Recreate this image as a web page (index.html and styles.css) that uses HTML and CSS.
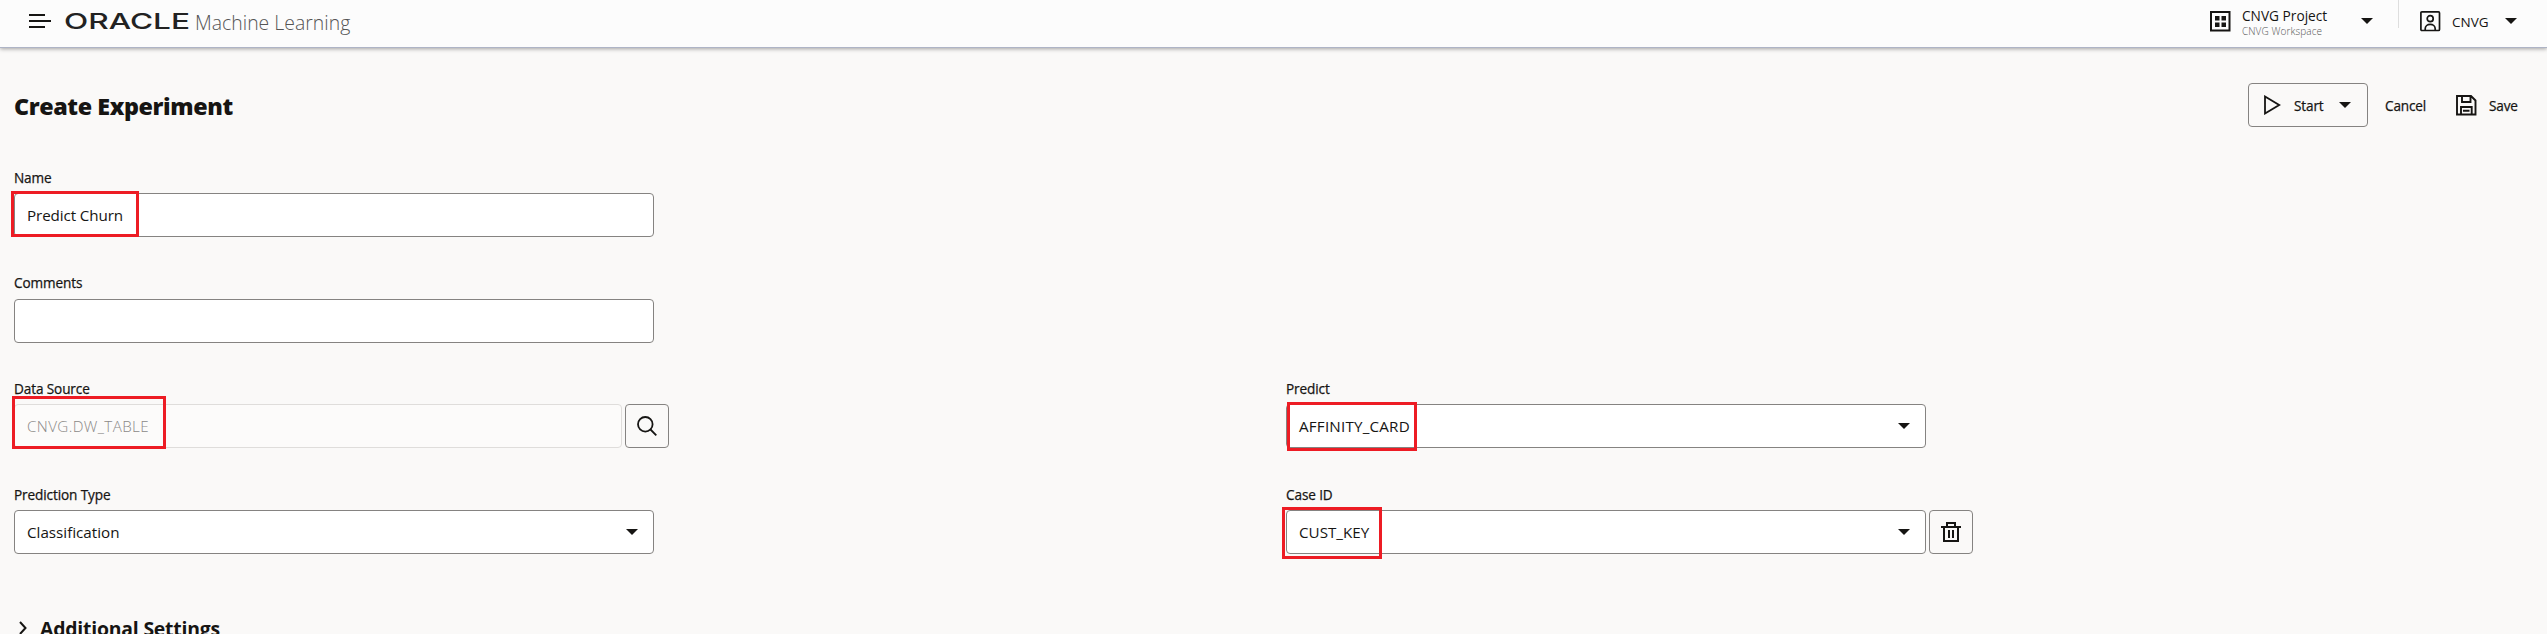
FILE: index.html
```html
<!DOCTYPE html>
<html lang="en">
<head>
<meta charset="utf-8">
<title>Create Experiment</title>
<link rel="stylesheet" href="styles.css">
</head>
<body>
<header class="topbar">
  <svg class="menu-icon" width="22" height="14" viewBox="0 0 22 14"><path d="M0 1h16M0 7h22M0 13h16" stroke="#161513" stroke-width="2"/></svg>
  <svg class="brand" width="125" height="32" viewBox="0 0 125 32"><text class="brand-text" x="-1" y="24" textLength="126" lengthAdjust="spacingAndGlyphs">ORACLE</text></svg>
  <span class="product">Machine Learning</span>
  <div class="top-right">
    <svg class="project-icon" width="21" height="21" viewBox="0 0 21 21"><path d="M1 1h18.500v18.500H1z" fill="none" stroke="#161513" stroke-width="2"/><path d="M5 5h4.500v4.500H5zM11.500 5H16v4.500h-4.500zM5 11.500h4.500V16H5zM11.500 11.500H16V16h-4.500z" fill="#161513"/></svg>
    <div class="project"><span class="project-name">CNVG Project</span><span class="workspace">CNVG Workspace</span></div>
    <svg class="caret project-caret" width="12" height="6" viewBox="0 0 12 6"><path d="M0 0h12L6 6z"/></svg>
    <div class="divider"></div>
    <svg class="user-icon" width="21" height="21" viewBox="0 0 21 21" fill="none" stroke="#161513" stroke-width="1.700"><rect x=".9" y=".9" width="18.600" height="18.600" rx="1"/><circle cx="10.200" cy="7.700" r="3"/><path d="M5.200 19v-1.300a5 4.300 0 0 1 10 0V19"/></svg>
    <span class="user">CNVG</span>
    <svg class="caret user-caret" width="12" height="6" viewBox="0 0 12 6"><path d="M0 0h12L6 6z"/></svg>
  </div>
</header>
<main class="page">
  <div class="title-row">
    <h1 class="title">Create Experiment</h1>
    <div class="actions">
      <button class="start">
        <svg class="play" width="17" height="20" viewBox="0 0 17 20"><path d="M1 1.500v17L15.200 10z" fill="none" stroke="#161513" stroke-width="1.800"/></svg>
        <span class="start-text">Start</span>
        <svg class="caret" width="12" height="6" viewBox="0 0 12 6"><path d="M0 0h12L6 6z"/></svg>
      </button>
      <span class="cancel">Cancel</span>
      <svg class="save-icon" width="21" height="21" viewBox="0 0 21 21" fill="none" stroke="#161513" stroke-width="1.900"><path d="M1 1h14l4.500 4.500v14H1zM6 1v6h8.500V1M5 19.500V12h10.700v7.500M7 15.800h6.500"/></svg>
      <span class="save">Save</span>
    </div>
  </div>
  <div class="form">
    <div class="field name-field"><label class="label">Name</label><div class="control"><div class="input"><span class="v-name">Predict Churn</span></div></div><i class="mark mark-name"></i></div>
    <div class="field comments-field"><label class="label">Comments</label><div class="control"><div class="input"></div></div></div>
    <div class="field source-field"><label class="label">Data Source</label><div class="control"><div class="input disabled"><span class="v-source">CNVG.DW_TABLE</span></div><button class="icon-button"><svg width="22" height="22" viewBox="0 0 22 22" fill="none" stroke="#161513" stroke-width="1.800"><circle cx="9.300" cy="9.300" r="7.300"/><path d="M14.500 14.500l5.800 5.800"/></svg></button></div><i class="mark mark-source"></i></div>
    <div class="field predict-field"><label class="label">Predict</label><div class="control"><div class="input"><span class="v-predict">AFFINITY_CARD</span><svg class="caret" width="12" height="6" viewBox="0 0 12 6"><path d="M0 0h12L6 6z"/></svg></div></div><i class="mark mark-predict"></i></div>
    <div class="field type-field"><label class="label">Prediction Type</label><div class="control"><div class="input"><span class="v-type">Classification</span><svg class="caret" width="12" height="6" viewBox="0 0 12 6"><path d="M0 0h12L6 6z"/></svg></div></div></div>
    <div class="field case-field"><label class="label">Case ID</label><div class="control"><div class="input"><span class="v-case">CUST_KEY</span><svg class="caret" width="12" height="6" viewBox="0 0 12 6"><path d="M0 0h12L6 6z"/></svg></div><button class="icon-button"><svg width="20" height="20" viewBox="0 0 20 20" fill="none" stroke="#161513" stroke-width="2"><path d="M0 5h20M3 5v14h14V5M6 5V1h8v4M8 8v8M12 8v8"/></svg></button></div><i class="mark mark-case"></i></div>
  </div>
  <div class="section">
    <svg class="chevron" width="8" height="14" viewBox="0 0 8 14"><path d="M1 1l5.500 6L1 13" fill="none" stroke="#161513" stroke-width="2"/></svg>
    <h2 class="section-title">Additional Settings</h2>
  </div>
</main>
</body>
</html>
```
FILE: styles.css
```css
* { box-sizing: border-box; }
body { margin: 0; width: 2547px; height: 634px; overflow: hidden; background: #faf9f8; color: #161513; font-family: "Open Sans", "Noto Sans", sans-serif; }
svg { display: block; flex: none; }
span, h1, h2, label { white-space: nowrap; }
button { font-family: inherit; background: transparent; border: 1px solid #858381; border-radius: 4px; padding: 0; color: inherit; }
.caret { fill: #161513; }
.topbar { height: 48px; display: flex; align-items: flex-start; background: #fcfcfc; border-bottom: 1px solid #aeb4c6; box-shadow: 0 1px 4px rgba(0, 0, 0, .35); padding-left: 29px; }
.menu-icon { margin-top: 14px; }
.brand { margin: 5px 0 0 14px; }
.brand-text { font: 500 22px Inter, sans-serif; fill: #222; }
.product { margin: 9px 0 0 5px; font-size: 19.400px; line-height: 28px; font-weight: 300; color: #555; letter-spacing: .02px; }
.top-right { margin-left: auto; width: 337px; display: flex; align-items: flex-start; }
.project-icon { margin-top: 11px; }
.project { width: 119px; margin: 7px 0 0 11px; display: flex; flex-direction: column; }
.project-name { font-size: 13.700px; line-height: 18px; }
.workspace { font-size: 10px; line-height: 12px; font-weight: 300; color: #555; letter-spacing: .1px; }
.project-caret { margin-top: 18px; }
.divider { width: 1px; height: 28px; margin-left: 25px; background: #dedede; }
.user-icon { margin: 11px 0 0 21px; }
.user { width: 53px; margin: 13px 0 0 11px; font-size: 13.500px; line-height: 18px; }
.user-caret { margin-top: 18px; }
.page { padding: 35px 30px 0 14px; }
.title-row { height: 44px; display: flex; align-items: center; justify-content: space-between; }
.title { margin: 0; padding-top: 2px; font-size: 23.300px; line-height: 32px; font-weight: 800; letter-spacing: -.4px; }
.actions { display: flex; align-items: center; font-size: 13.600px; }
.start { width: 120px; height: 44px; display: flex; align-items: center; padding-left: 15px; font-size: 13.600px; }
.start-text, .cancel, .save { padding-top: 1px; letter-spacing: -.15px; -webkit-text-stroke: .25px #161513; }
.start-text { width: 45px; margin-left: 13px; text-align: left; }
.cancel { width: 41px; margin-left: 17px; }
.save-icon { margin-left: 30px; }
.save { width: 28px; margin-left: 12px; }
.form { display: grid; grid-template-columns: 1272px 1fr; grid-template-rows: 106px 105px 106px 64px; padding-top: 40px; }
.field { position: relative; }
.name-field, .comments-field { grid-column: 1 / 3; }
.label { display: block; height: 26px; padding-top: 2px; font-size: 13.600px; line-height: 18px; letter-spacing: -.12px; -webkit-text-stroke: .25px #161513; }
.comments-field .label { padding-top: 1px; }
.control { display: flex; gap: 3px; }
.input { width: 640px; height: 44px; display: flex; align-items: center; justify-content: space-between; background: #fff; border: 1px solid #858381; border-radius: 4px; padding: 0 15px 0 12px; font-size: 15.200px; }
.v-name { letter-spacing: -.1px; }
.v-source { letter-spacing: .38px; }
.v-predict { letter-spacing: .2px; }
.disabled { width: 608px; background: #fcfbfa; border-color: #dfdddb; color: #8b8987; font-weight: 300; }
.icon-button { width: 44px; height: 44px; display: flex; align-items: center; justify-content: center; }
.mark { position: absolute; border: 3px solid #ed1c24; }
.mark-name { left: -3px; top: 24px; width: 128px; height: 46px; }
.mark-source { left: -2px; top: 18px; width: 154px; height: 53px; }
.mark-predict { left: 1px; top: 24px; width: 130px; height: 49px; }
.mark-case { left: -4px; top: 23px; width: 100px; height: 52px; }
.section { display: flex; align-items: flex-start; padding: 66px 0 0 5px; }
.chevron { margin-top: 7px; }
.section-title { margin: 1px 0 0 13px; font-size: 19.400px; line-height: 28px; font-weight: 700; letter-spacing: -.2px; }
```
